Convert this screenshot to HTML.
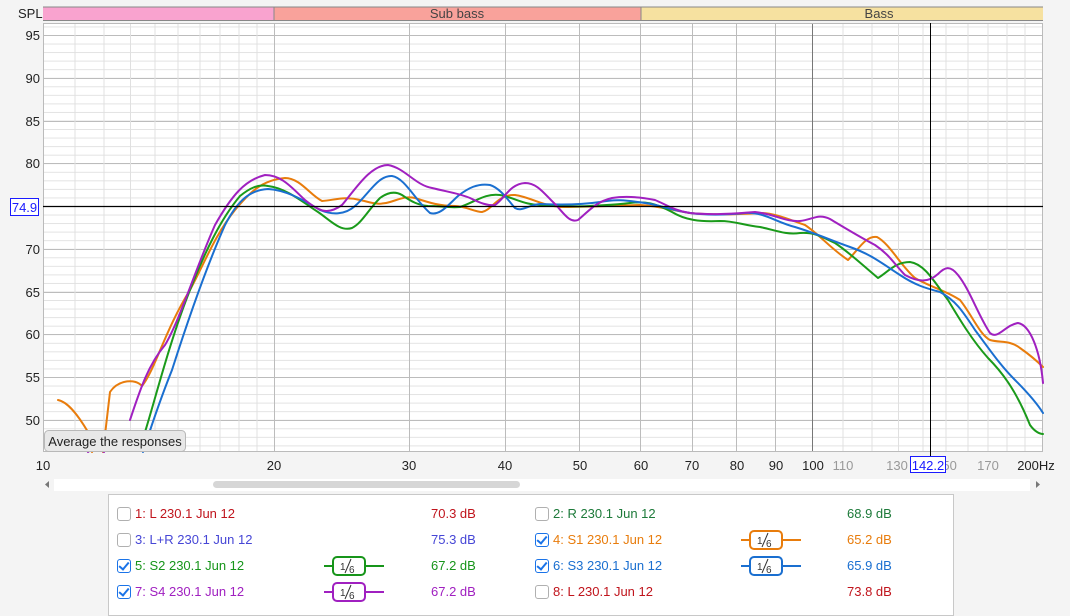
<!DOCTYPE html>
<html><head><meta charset="utf-8"><style>
html,body{margin:0;padding:0;background:#f4f4f4;width:1070px;height:608px;overflow:hidden;font-family:"Liberation Sans",sans-serif}
svg{position:absolute;left:0;top:0}
.leg{position:absolute;left:108px;top:494px;width:844px;height:120px;background:#fff;border:1px solid #c8c8c8}
.row{position:absolute;font-size:13px;white-space:nowrap}
.cb{position:absolute;width:12px;height:12px;border:1px solid #b0b0b0;border-radius:3px;background:#fff}
.cb.on{border-color:#1a73e8}
.cb.on::after{content:"";position:absolute;left:3px;top:0px;width:4px;height:8px;border:solid #1a73e8;border-width:0 2px 2px 0;transform:rotate(40deg)}
</style></head><body>
<svg width="1070" height="608" xmlns="http://www.w3.org/2000/svg" font-family="Liberation Sans, sans-serif">
<defs>
<pattern id="hp" x="0" y="35" width="1070" height="8.55" patternUnits="userSpaceOnUse">
<line x1="0" y1="0.5" x2="1070" y2="0.5" stroke="#e2e2e2" stroke-width="1"/>
</pattern>
</defs>
<rect x="43" y="7" width="231" height="13" fill="#f9a3cf"/>
<rect x="274" y="7" width="367" height="13" fill="#f9a29b"/>
<rect x="641" y="7" width="402" height="13" fill="#f6e1a0"/>
<line x1="43" y1="7" x2="1043" y2="7" stroke="#888"/>
<line x1="43" y1="20.5" x2="1043" y2="20.5" stroke="#888"/>
<line x1="274" y1="7" x2="274" y2="20" stroke="#888"/>
<line x1="641" y1="7" x2="641" y2="20" stroke="#888"/>
<text x="18" y="18" font-size="13" fill="#222">SPL</text>
<text x="457" y="18" font-size="13" fill="#444" text-anchor="middle">Sub bass</text>
<text x="879" y="18" font-size="13" fill="#444" text-anchor="middle">Bass</text>
<rect x="43" y="23" width="1000" height="429" fill="#fff"/>
<rect x="43" y="23" width="1000" height="429" fill="url(#hp)"/>
<g stroke="#bcbcbc" stroke-width="1">
<line x1="43" y1="35.5" x2="1043" y2="35.5"/><line x1="43" y1="78.5" x2="1043" y2="78.5"/><line x1="43" y1="121.5" x2="1043" y2="121.5"/><line x1="43" y1="163.5" x2="1043" y2="163.5"/><line x1="43" y1="206.5" x2="1043" y2="206.5"/><line x1="43" y1="249.5" x2="1043" y2="249.5"/><line x1="43" y1="292.5" x2="1043" y2="292.5"/><line x1="43" y1="334.5" x2="1043" y2="334.5"/><line x1="43" y1="377.5" x2="1043" y2="377.5"/><line x1="43" y1="420.5" x2="1043" y2="420.5"/>
</g>
<g stroke="#e0e0e0" stroke-width="1">
<line x1="75" y1="23" x2="75" y2="452"/><line x1="104" y1="23" x2="104" y2="452"/><line x1="130.5" y1="23" x2="130.5" y2="452"/><line x1="155" y1="23" x2="155" y2="452"/><line x1="178" y1="23" x2="178" y2="452"/><line x1="200" y1="23" x2="200" y2="452"/><line x1="220" y1="23" x2="220" y2="452"/><line x1="239" y1="23" x2="239" y2="452"/><line x1="257" y1="23" x2="257" y2="452"/>
<line x1="843" y1="23" x2="843" y2="452"/><line x1="872" y1="23" x2="872" y2="452"/><line x1="898.5" y1="23" x2="898.5" y2="452"/><line x1="923" y1="23" x2="923" y2="452"/><line x1="946" y1="23" x2="946" y2="452"/><line x1="968" y1="23" x2="968" y2="452"/><line x1="988" y1="23" x2="988" y2="452"/><line x1="1007" y1="23" x2="1007" y2="452"/><line x1="1025" y1="23" x2="1025" y2="452"/>
</g>
<g stroke="#bcbcbc" stroke-width="1">
<line x1="274.5" y1="23" x2="274.5" y2="452"/><line x1="409.5" y1="23" x2="409.5" y2="452"/><line x1="505.5" y1="23" x2="505.5" y2="452"/><line x1="579.5" y1="23" x2="579.5" y2="452"/><line x1="640.5" y1="23" x2="640.5" y2="452"/><line x1="692.5" y1="23" x2="692.5" y2="452"/><line x1="736.5" y1="23" x2="736.5" y2="452"/><line x1="775.5" y1="23" x2="775.5" y2="452"/>
</g>
<line x1="812.5" y1="23" x2="812.5" y2="452" stroke="#777"/>
<rect x="43.5" y="23.5" width="999" height="428" fill="none" stroke="#bbb"/>
<g fill="none" stroke-width="2" stroke-linejoin="round" stroke-linecap="round">
<path stroke="#e87c0c" d="M58 400 C68 402 78 415 88 432 L92 452 M103 452 L110 392 C118 380 135 378 142 386 C155 370 165 330 190 290 C205 262 215 235 235 210 C250 192 262 180 285 178 C300 178 310 195 322 201 C335 200 345 196 360 200 C370 202 378 206 390 202 C400 199 405 196 415 198 C430 203 440 206 455 206 C465 206 475 212 482 212 C492 210 498 194 515 195 C530 197 540 205 560 207 C585 207 600 206 640 205 C660 206 670 210 690 213 C710 215 730 215 760 213 C775 213 790 220 805 225 C820 235 830 248 848 260 C858 250 866 235 877 237 C890 244 900 265 915 278 C930 287 945 290 960 300 C972 315 980 335 990 340 C1000 343 1010 340 1020 348 C1030 355 1038 362 1043 367"/>
<path stroke="#1a9a1a" d="M145 432 C155 400 170 340 190 290 C205 252 220 220 240 196 C250 188 258 184 268 186 C285 188 300 200 318 212 C330 220 340 232 352 228 C362 223 368 210 380 198 C388 192 395 191 402 195 C412 202 418 205 428 206 C440 206 450 208 460 207 C475 202 485 193 500 195 C515 198 525 205 540 205 C560 206 575 207 590 206 C605 205 615 205 630 203 C645 201 655 203 672 212 C685 220 700 222 720 221 C735 221 742 225 760 227 C775 230 785 235 800 233 C815 232 822 237 835 243 C850 253 860 263 878 278 C888 272 895 262 910 262 C925 264 935 283 948 300 C960 320 972 340 988 358 C1005 375 1018 395 1030 425 C1035 432 1040 434 1043 434"/>
<path stroke="#1a6fd0" d="M143 452 C150 430 160 400 172 370 C188 320 205 270 225 225 C238 200 250 190 268 189 C285 190 300 198 320 210 C332 215 345 215 355 206 C368 195 378 175 392 176 C405 178 415 200 430 213 C440 216 448 205 458 196 C468 188 478 183 490 185 C500 188 508 200 515 208 C522 212 528 205 540 204 C560 205 580 205 600 202 C615 199 625 200 645 203 C660 205 670 210 690 213 C705 215 725 215 745 213 C765 212 775 222 795 227 C815 233 830 240 850 247 C870 254 880 262 900 275 C915 285 925 288 940 292 C955 300 962 310 975 330 C990 350 1000 365 1015 380 C1030 395 1038 405 1043 413"/>
<path stroke="#a020c0" d="M88 452 C95 445 100 450 104 452 M130 420 C140 390 148 365 165 345 C180 320 195 270 215 225 C232 195 245 180 265 175 C282 175 292 188 305 200 C320 212 328 215 342 205 C355 190 370 165 388 165 C405 168 415 185 432 188 C448 192 458 193 470 198 C480 203 488 206 495 205 C505 198 510 184 525 183 C538 183 545 195 556 205 C565 215 570 223 578 220 C588 212 595 202 612 198 C625 196 640 197 655 200 C665 204 675 211 690 213 C710 215 730 214 755 212 C775 214 785 222 800 221 C812 220 818 213 830 219 C845 228 858 236 875 245 C890 255 895 265 905 275 C918 282 928 283 938 274 C945 267 950 265 958 275 C970 290 978 315 990 333 C998 340 1005 325 1018 323 C1030 325 1040 350 1043 383"/>
</g>
<line x1="930.5" y1="23" x2="930.5" y2="456" stroke="#000"/>
<line x1="43" y1="206.5" x2="1043" y2="206.5" stroke="#000" stroke-width="1.3"/>
<rect x="10.5" y="198.5" width="28" height="17" fill="#fff" stroke="#1a1aff"/>
<text x="24.5" y="212" font-size="13" fill="#1a1aff" text-anchor="middle">74.9</text>
<g font-size="13" fill="#222" text-anchor="end">
<text x="40" y="40">95</text><text x="40" y="83">90</text><text x="40" y="126">85</text><text x="40" y="168">80</text><text x="40" y="254">70</text><text x="40" y="297">65</text><text x="40" y="339">60</text><text x="40" y="382">55</text><text x="40" y="425">50</text>
</g>
<g font-size="13" fill="#222" text-anchor="middle">
<text x="43" y="470">10</text><text x="274" y="470">20</text><text x="409" y="470">30</text><text x="505" y="470">40</text><text x="580" y="470">50</text><text x="641" y="470">60</text><text x="692" y="470">70</text><text x="737" y="470">80</text><text x="776" y="470">90</text><text x="813" y="470">100</text>
<text x="1036" y="470">200Hz</text>
</g>
<g font-size="13" fill="#999" text-anchor="middle">
<text x="843" y="470">110</text><text x="897" y="470">130</text><text x="946" y="470">150</text><text x="988" y="470">170</text>
</g>
<rect x="910.5" y="456.5" width="35" height="16" fill="#fff" stroke="#1a1aff"/>
<text x="928" y="470" font-size="13" fill="#1a1aff" text-anchor="middle">142.2</text>
<rect x="44.5" y="430.5" width="141" height="21" rx="4" fill="#e8e8e8" stroke="#b8b8b8"/>
<text x="115" y="446" font-size="13" fill="#222" text-anchor="middle">Average the responses</text>
<rect x="54" y="479" width="976" height="12" fill="#fff"/>
<rect x="213" y="481" width="307" height="7" rx="3.5" fill="#d6d6d6"/>
<path d="M49 481 L45 484.5 L49 488 Z" fill="#777"/>
<path d="M1036 481 L1040 484.5 L1036 488 Z" fill="#777"/>
</svg>
<div class="leg">
<div class="cb" style="left:8px;top:12px"></div>
<div class="row" style="left:26px;top:11px;color:#c0141c">1: L 230.1 Jun 12</div>
<div class="row" style="left:322px;top:11px;color:#c0141c">70.3 dB</div>
<div class="cb" style="left:8px;top:38px"></div>
<div class="row" style="left:26px;top:37px;color:#4646d6">3: L+R 230.1 Jun 12</div>
<div class="row" style="left:322px;top:37px;color:#4646d6">75.3 dB</div>
<div class="cb on" style="left:8px;top:64px"></div>
<div class="row" style="left:26px;top:63px;color:#17951a">5: S2 230.1 Jun 12</div>
<div class="row" style="left:322px;top:63px;color:#17951a">67.2 dB</div>
<div class="cb on" style="left:8px;top:90px"></div>
<div class="row" style="left:26px;top:89px;color:#a020c0">7: S4 230.1 Jun 12</div>
<div class="row" style="left:322px;top:89px;color:#a020c0">67.2 dB</div>

<div class="cb" style="left:426px;top:12px"></div>
<div class="row" style="left:444px;top:11px;color:#1d7a3a">2: R 230.1 Jun 12</div>
<div class="row" style="left:738px;top:11px;color:#1d7a3a">68.9 dB</div>
<div class="cb on" style="left:426px;top:38px"></div>
<div class="row" style="left:444px;top:37px;color:#e87c0c">4: S1 230.1 Jun 12</div>
<div class="row" style="left:738px;top:37px;color:#e87c0c">65.2 dB</div>
<div class="cb on" style="left:426px;top:64px"></div>
<div class="row" style="left:444px;top:63px;color:#1a6fd0">6: S3 230.1 Jun 12</div>
<div class="row" style="left:738px;top:63px;color:#1a6fd0">65.9 dB</div>
<div class="cb" style="left:426px;top:90px"></div>
<div class="row" style="left:444px;top:89px;color:#c0141c">8: L 230.1 Jun 12</div>
<div class="row" style="left:738px;top:89px;color:#c0141c">73.8 dB</div>

<svg width="844" height="114" style="position:absolute;left:0;top:0" font-family="Liberation Sans, sans-serif">
<g fill="#fff" stroke-width="2">
<g stroke="#17951a"><line x1="215" y1="71" x2="275" y2="71"/><rect x="224" y="62" width="32" height="18" rx="4"/></g>
<g stroke="#a020c0"><line x1="215" y1="97" x2="275" y2="97"/><rect x="224" y="88" width="32" height="18" rx="4"/></g>
<g stroke="#e87c0c"><line x1="632" y1="45" x2="692" y2="45"/><rect x="641" y="36" width="32" height="18" rx="4"/></g>
<g stroke="#1a6fd0"><line x1="632" y1="71" x2="692" y2="71"/><rect x="641" y="62" width="32" height="18" rx="4"/></g>
</g>
<g fill="#333" font-size="10">
<text x="231" y="75">1</text><text x="240" y="78">6</text><line x1="242" y1="64" x2="236" y2="78" stroke="#333"/>
<text x="231" y="101">1</text><text x="240" y="104">6</text><line x1="242" y1="90" x2="236" y2="104" stroke="#333"/>
<text x="648" y="49">1</text><text x="657" y="52">6</text><line x1="659" y1="38" x2="653" y2="52" stroke="#333"/>
<text x="648" y="75">1</text><text x="657" y="78">6</text><line x1="659" y1="64" x2="653" y2="78" stroke="#333"/>
</g>
</svg>
</div>
</body></html>
